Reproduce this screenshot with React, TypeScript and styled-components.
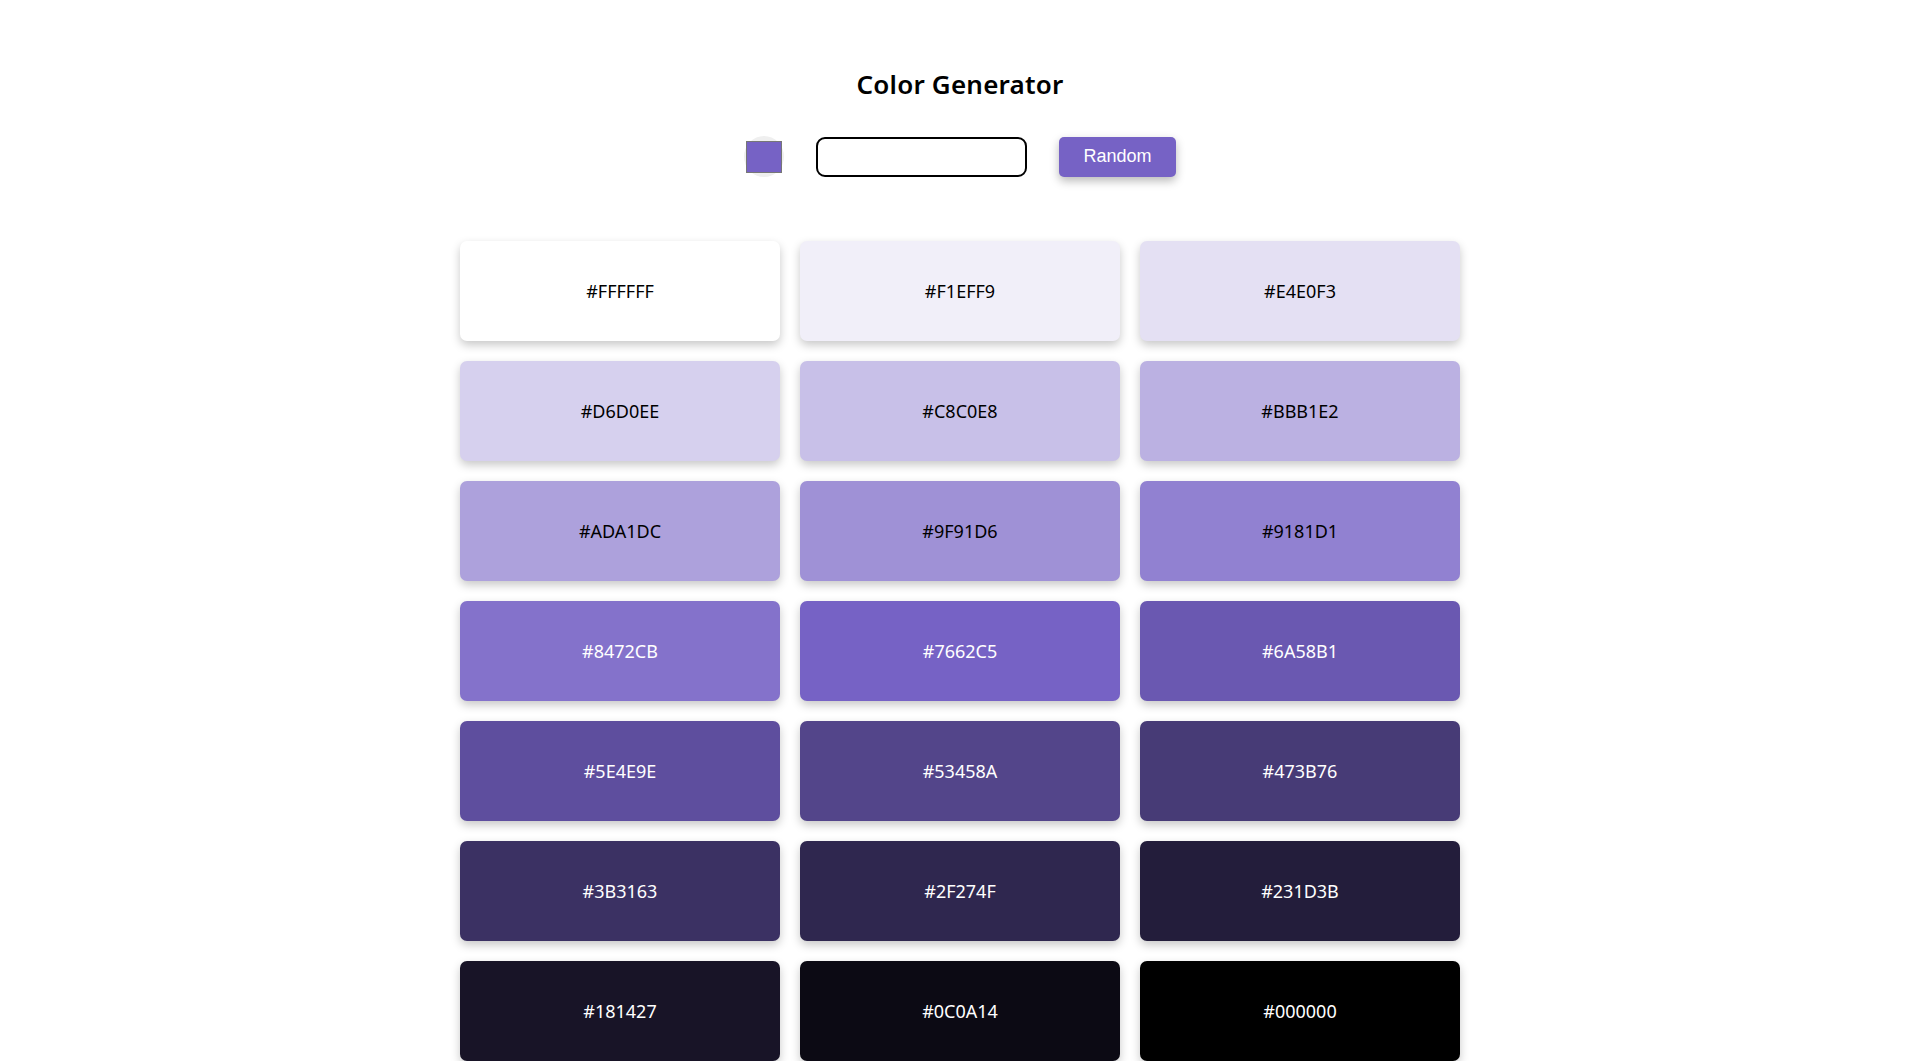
import React from "react";
import styled, { createGlobalStyle } from "styled-components";

const GlobalStyle = createGlobalStyle`
  html, body { margin: 0; padding: 0; background: #ffffff; }
  body { font-family: "Noto Sans", "Open Sans", sans-serif; color: #000; }
`;

const Page = styled.main`
  display: flex;
  flex-direction: column;
  align-items: center;
  padding-top: 67px;
`;

const Title = styled.h1`
  margin: 0;
  font-size: 26px;
  font-weight: 600;
  line-height: 34px;
  letter-spacing: 0.2px;
`;

const Controls = styled.div`
  display: flex;
  align-items: center;
  gap: 32px;
  margin-top: 35px;
`;

const SwatchWrap = styled.div`
  width: 40px;
  height: 41px;
  border-radius: 50%;
  background: #efefef;
  display: flex;
  align-items: center;
  justify-content: center;
`;

const Swatch = styled.div<{ $color: string }>`
  width: 34px;
  height: 30px;
  background: ${(p) => p.$color};
  border: 1px solid #777;
`;

const TextInput = styled.input`
  box-sizing: border-box;
  width: 211px;
  height: 40px;
  border: 2px solid #000;
  border-radius: 9px;
  padding: 0 12px;
  font-size: 16px;
  outline: none;
`;

const RandomButton = styled.button`
  width: 117px;
  height: 40px;
  border: none;
  border-radius: 5px;
  background: #7662c5;
  color: #fff;
  font-family: "Liberation Sans", Arial, sans-serif;
  font-size: 18px;
  box-shadow: 0 4px 10px rgba(0, 0, 0, 0.28);
  cursor: pointer;
`;

const Grid = styled.section`
  display: grid;
  grid-template-columns: repeat(3, 320px);
  gap: 20px;
  margin-top: 64px;
  padding-bottom: 40px;
`;

const Card = styled.div<{ $bg: string; $light: boolean }>`
  height: 100px;
  border-radius: 7px;
  background: ${(p) => p.$bg};
  color: ${(p) => (p.$light ? "#ffffff" : "#000000")};
  display: flex;
  align-items: center;
  justify-content: center;
  font-size: 18px;
  box-shadow: 0 4px 10px rgba(0, 0, 0, 0.22);
`;

const colors = [
  "#FFFFFF", "#F1EFF9", "#E4E0F3",
  "#D6D0EE", "#C8C0E8", "#BBB1E2",
  "#ADA1DC", "#9F91D6", "#9181D1",
  "#8472CB", "#7662C5", "#6A58B1",
  "#5E4E9E", "#53458A", "#473B76",
  "#3B3163", "#2F274F", "#231D3B",
  "#181427", "#0C0A14", "#000000",
];

export default function App() {
  return (
    <>
      <GlobalStyle />
      <Page>
        <Title>Color Generator</Title>
        <Controls>
          <SwatchWrap>
            <Swatch $color="#7662C5" />
          </SwatchWrap>
          <TextInput type="text" />
          <RandomButton>Random</RandomButton>
        </Controls>
        <Grid>
          {colors.map((c, i) => (
            <Card key={c} $bg={c} $light={i >= 9}>
              {c}
            </Card>
          ))}
        </Grid>
      </Page>
    </>
  );
}
